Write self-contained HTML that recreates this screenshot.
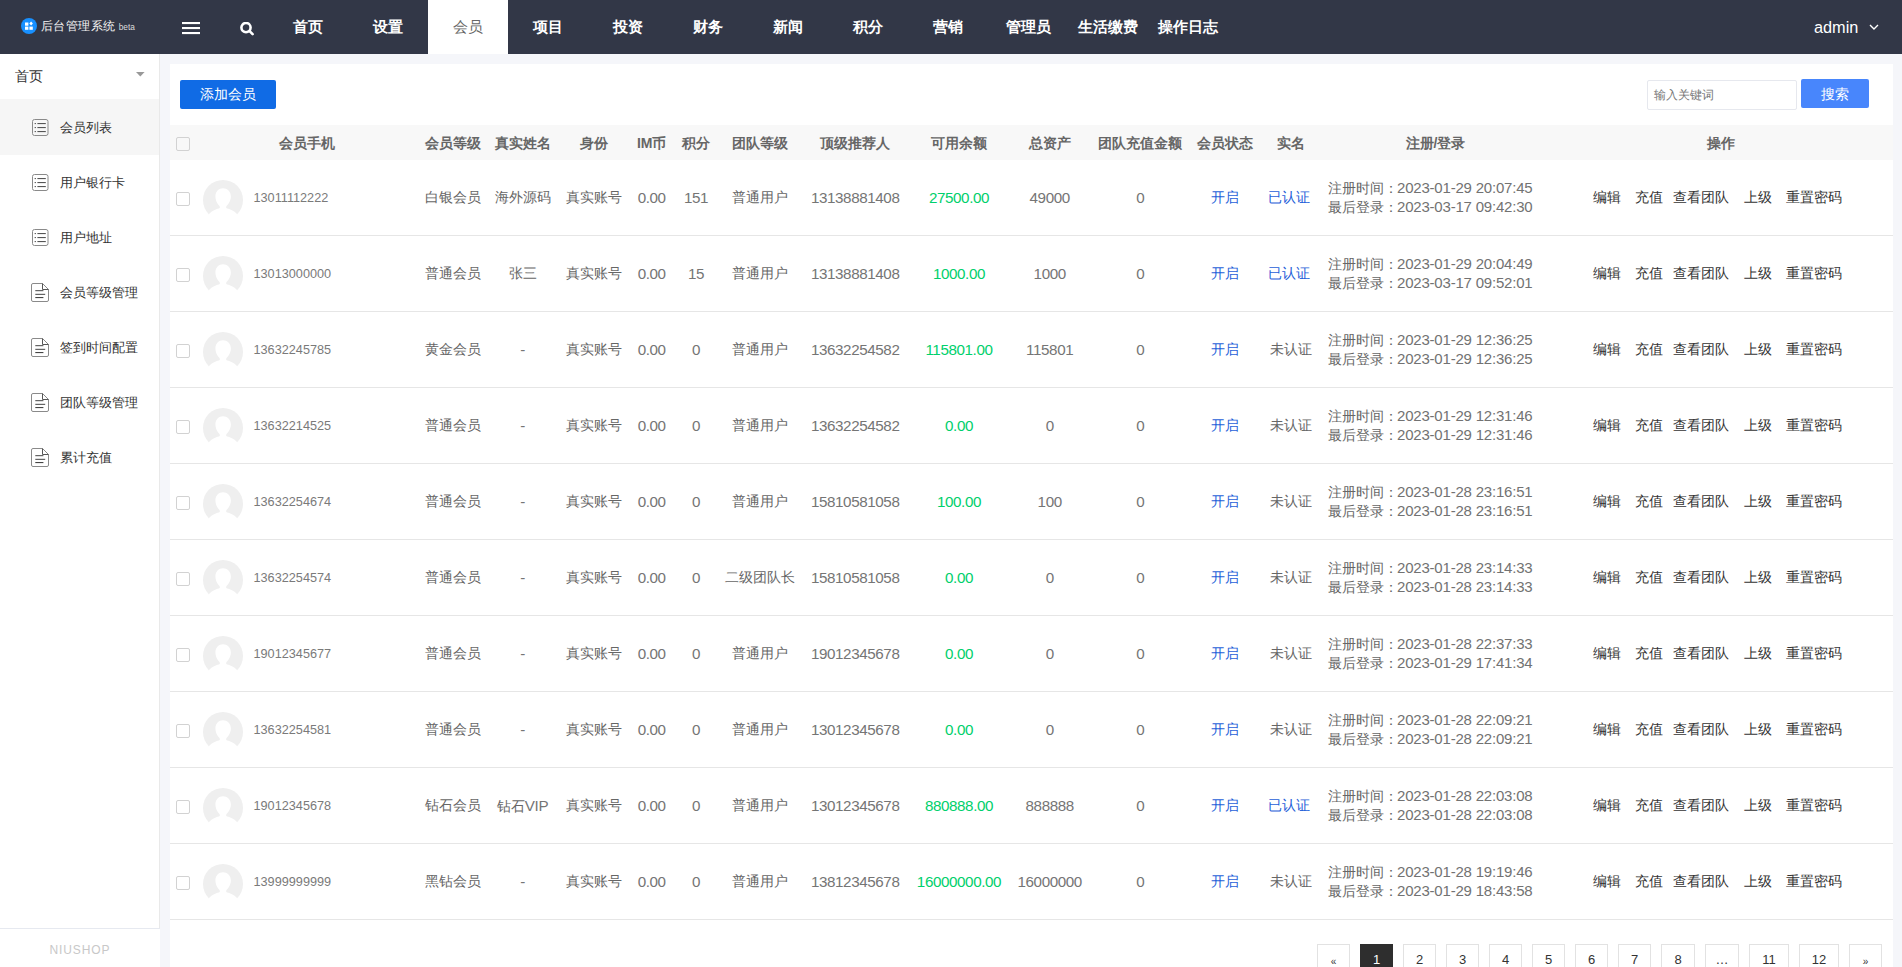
<!DOCTYPE html>
<html><head><meta charset="utf-8">
<style>
*{box-sizing:border-box;margin:0;padding:0}
html,body{width:1902px;height:967px;overflow:hidden}
body{background:#f5f6fa;font-family:"Liberation Sans",sans-serif;position:relative;color:#666}
.hd{position:absolute;left:0;top:0;width:1902px;height:54px;background:#323747}
.logo{position:absolute;left:21px;top:18px;width:16px;height:16px;border-radius:50%;background:#1890ff}
.logot{position:absolute;left:41px;top:16.8px;font-size:12.4px;letter-spacing:0.45px;line-height:18px;color:#f4f4f4;white-space:nowrap}
.logot small{font-size:8.3px;margin-left:3px;color:#ddd;letter-spacing:0}
.nv{position:absolute;top:0;width:80px;height:54px;line-height:54px;text-align:center;color:#fff;font-size:15px;font-weight:bold}
.nv.on{background:#fff;color:#666;font-weight:normal}
.admin{position:absolute;left:1814px;top:16px;font-size:16.3px;line-height:22px;color:#fff}
.sb{position:absolute;left:0;top:54px;width:160px;height:913px;background:#fff;border-right:1px solid #e9e9e9}
.sbh{position:absolute;left:15px;top:66px;font-size:14px;line-height:20px;color:#333}
.si{position:absolute;left:0;width:159px;height:56px}
.si.act{background:#f6f6f6}
.si .ic{position:absolute;left:32px;top:19px}
.si span{position:absolute;left:60px;top:19px;font-size:13px;line-height:20px;color:#333;white-space:nowrap}
.sf{position:absolute;left:0;top:928px;width:160px;height:39px;background:#fff;border-top:1px solid #e6e9f0}
.sf span{position:absolute;left:0;width:160px;top:14px;text-align:center;font-size:12px;line-height:14px;color:#c8c8c8;letter-spacing:0.9px}
.pn{position:absolute;left:170px;top:64px;width:1723px;height:903px;background:#fff}
.btn{position:absolute;left:180px;top:80px;width:96px;height:29px;background:#106be5;border-radius:2px;color:#fff;font-size:14px;line-height:29px;text-align:center}
.inp{position:absolute;left:1647px;top:80px;width:150px;height:30px;border:1px solid #e6e8ee;border-radius:2px;background:#fff;font-size:12px;line-height:28px;padding-left:6px;color:#777}
.sbtn{position:absolute;left:1801px;top:79px;width:68px;height:29px;background:#4886fc;border-radius:2px;color:#fff;font-size:14px;line-height:30px;text-align:center}
.th{position:absolute;left:170px;top:125px;width:1723px;height:35px;background:#f8f8f8}
.c{position:absolute;width:200px;height:75px;line-height:75px;text-align:center;font-size:14px;color:#666;white-space:nowrap}
.c.h{height:35px;line-height:36px;font-weight:bold}
.c .n{font-size:15.2px;letter-spacing:-0.4px;color:#757575}
.c.g .n{color:#00d06c}
.reg .n{font-size:15px;letter-spacing:-0.2px;color:#727272;margin-left:-1px}
.c.g{color:#12c66b}
.c.b{color:#1f5fd9}
.row{position:absolute;left:170px;width:1723px;height:76px;border-bottom:1px solid #e6e6e6}
.cb{position:absolute;left:176px;width:14px;height:14px;border:1px solid #d2d2d2;border-radius:2px;background:#fff}
.cbh{top:137px;background:#f8f8f8}
.av{position:absolute;left:203px;width:40px;height:40px}
.ph{position:absolute;left:253.5px;height:75px;line-height:77px;font-size:12.7px;color:#7a7a7a}
.reg{position:absolute;left:1328px;font-size:14px;line-height:19px;color:#666;white-space:nowrap}
.ops{position:absolute;left:0;width:0;height:75px}
.ops span{position:absolute;top:0;line-height:75px;font-size:14px;color:#333;white-space:nowrap}
.pg{position:absolute;top:944px;height:32px;border:1px solid #e2e2e2;background:#fff;text-align:center;line-height:30px;font-size:13px;color:#333}
.pg.on{background:#2e2e2e;border-color:#2e2e2e;color:#fff}
</style></head><body>
<div class="hd">
  <div class="logo"><svg width="16" height="16" viewBox="0 0 16 16"><rect x="4" y="4.5" width="3.4" height="3.2" fill="#fff"/><rect x="4" y="8.6" width="3.4" height="3.2" fill="#fff"/><rect x="8.4" y="8.6" width="3.4" height="3.2" fill="#fff"/><path d="M10.1 3.6 L11.9 5.6 L10.1 7.6 L8.3 5.6 Z" fill="#fff"/></svg></div>
  <div class="logot">后台管理系统<small>beta</small></div>
  <svg style="position:absolute;left:182px;top:22px" width="18" height="13" viewBox="0 0 18 13"><rect x="0" y="0" width="18" height="2.1" fill="#fff"/><rect x="0" y="5" width="18" height="2.1" fill="#fff"/><rect x="0" y="10" width="18" height="2.1" fill="#fff"/></svg>
  <svg style="position:absolute;left:240px;top:22px" width="15" height="14" viewBox="0 0 15 14"><circle cx="6" cy="5.6" r="4.6" fill="none" stroke="#fff" stroke-width="2.6"/><path d="M9.6 9.2 L12.6 12.2" stroke="#fff" stroke-width="2.6" stroke-linecap="round"/></svg>
  <div class="nv" style="left:268px">首页</div><div class="nv" style="left:348px">设置</div><div class="nv on" style="left:428px">会员</div><div class="nv" style="left:508px">项目</div><div class="nv" style="left:588px">投资</div><div class="nv" style="left:668px">财务</div><div class="nv" style="left:748px">新闻</div><div class="nv" style="left:828px">积分</div><div class="nv" style="left:908px">营销</div><div class="nv" style="left:988px">管理员</div><div class="nv" style="left:1068px">生活缴费</div><div class="nv" style="left:1148px">操作日志</div>
  <div class="admin">admin</div>
  <svg style="position:absolute;left:1869px;top:24px" width="10" height="7" viewBox="0 0 10 7"><path d="M1 1 L5 5 L9 1" fill="none" stroke="#fff" stroke-width="1.4"/></svg>
</div>
<div class="sb"></div>
<div class="sbh">首页</div>
<svg style="position:absolute;left:135.5px;top:72px" width="9" height="5" viewBox="0 0 9 5"><path d="M0 0 H8.6 L4.3 4.6 Z" fill="#999"/></svg>
<div class="si act" style="top:99px"><svg style="position:absolute;left:32px;top:20px" width="17" height="17" viewBox="0 0 17 17"><rect x="0.5" y="0.5" width="15.5" height="16" rx="2" fill="none" stroke="#8a8a8a" stroke-width="1"/><rect x="2.6" y="4" width="1.4" height="1.1" fill="#666"/><rect x="2.6" y="8" width="1.4" height="1.1" fill="#666"/><rect x="2.6" y="12" width="1.4" height="1.1" fill="#666"/><rect x="5.4" y="4" width="8.4" height="1.1" fill="#555"/><rect x="5.4" y="8" width="8.4" height="1.1" fill="#555"/><rect x="5.4" y="12" width="8.4" height="1.1" fill="#555"/></svg><span>会员列表</span></div>
<div class="si" style="top:154px"><svg style="position:absolute;left:32px;top:20px" width="17" height="17" viewBox="0 0 17 17"><rect x="0.5" y="0.5" width="15.5" height="16" rx="2" fill="none" stroke="#8a8a8a" stroke-width="1"/><rect x="2.6" y="4" width="1.4" height="1.1" fill="#666"/><rect x="2.6" y="8" width="1.4" height="1.1" fill="#666"/><rect x="2.6" y="12" width="1.4" height="1.1" fill="#666"/><rect x="5.4" y="4" width="8.4" height="1.1" fill="#555"/><rect x="5.4" y="8" width="8.4" height="1.1" fill="#555"/><rect x="5.4" y="12" width="8.4" height="1.1" fill="#555"/></svg><span>用户银行卡</span></div>
<div class="si" style="top:209px"><svg style="position:absolute;left:32px;top:20px" width="17" height="17" viewBox="0 0 17 17"><rect x="0.5" y="0.5" width="15.5" height="16" rx="2" fill="none" stroke="#8a8a8a" stroke-width="1"/><rect x="2.6" y="4" width="1.4" height="1.1" fill="#666"/><rect x="2.6" y="8" width="1.4" height="1.1" fill="#666"/><rect x="2.6" y="12" width="1.4" height="1.1" fill="#666"/><rect x="5.4" y="4" width="8.4" height="1.1" fill="#555"/><rect x="5.4" y="8" width="8.4" height="1.1" fill="#555"/><rect x="5.4" y="12" width="8.4" height="1.1" fill="#555"/></svg><span>用户地址</span></div>
<div class="si" style="top:264px"><svg style="position:absolute;left:31px;top:19px" width="18" height="19" viewBox="0 0 18 19"><path d="M2 0.5 H11.5 L17.5 6.5 V17 Q17.5 18.5 16 18.5 H2 Q0.5 18.5 0.5 17 V2 Q0.5 0.5 2 0.5 Z" fill="none" stroke="#8a8a8a" stroke-width="1"/><path d="M11.5 0.5 V6.5 H17.5" fill="none" stroke="#555" stroke-width="1"/><rect x="4.3" y="7.1" width="8.1" height="1.1" fill="#555"/><rect x="4.3" y="10.8" width="9.9" height="1.1" fill="#555"/><rect x="4.3" y="14" width="8.1" height="1.1" fill="#444"/></svg><span>会员等级管理</span></div>
<div class="si" style="top:319px"><svg style="position:absolute;left:31px;top:19px" width="18" height="19" viewBox="0 0 18 19"><path d="M2 0.5 H11.5 L17.5 6.5 V17 Q17.5 18.5 16 18.5 H2 Q0.5 18.5 0.5 17 V2 Q0.5 0.5 2 0.5 Z" fill="none" stroke="#8a8a8a" stroke-width="1"/><path d="M11.5 0.5 V6.5 H17.5" fill="none" stroke="#555" stroke-width="1"/><rect x="4.3" y="7.1" width="8.1" height="1.1" fill="#555"/><rect x="4.3" y="10.8" width="9.9" height="1.1" fill="#555"/><rect x="4.3" y="14" width="8.1" height="1.1" fill="#444"/></svg><span>签到时间配置</span></div>
<div class="si" style="top:374px"><svg style="position:absolute;left:31px;top:19px" width="18" height="19" viewBox="0 0 18 19"><path d="M2 0.5 H11.5 L17.5 6.5 V17 Q17.5 18.5 16 18.5 H2 Q0.5 18.5 0.5 17 V2 Q0.5 0.5 2 0.5 Z" fill="none" stroke="#8a8a8a" stroke-width="1"/><path d="M11.5 0.5 V6.5 H17.5" fill="none" stroke="#555" stroke-width="1"/><rect x="4.3" y="7.1" width="8.1" height="1.1" fill="#555"/><rect x="4.3" y="10.8" width="9.9" height="1.1" fill="#555"/><rect x="4.3" y="14" width="8.1" height="1.1" fill="#444"/></svg><span>团队等级管理</span></div>
<div class="si" style="top:429px"><svg style="position:absolute;left:31px;top:19px" width="18" height="19" viewBox="0 0 18 19"><path d="M2 0.5 H11.5 L17.5 6.5 V17 Q17.5 18.5 16 18.5 H2 Q0.5 18.5 0.5 17 V2 Q0.5 0.5 2 0.5 Z" fill="none" stroke="#8a8a8a" stroke-width="1"/><path d="M11.5 0.5 V6.5 H17.5" fill="none" stroke="#555" stroke-width="1"/><rect x="4.3" y="7.1" width="8.1" height="1.1" fill="#555"/><rect x="4.3" y="10.8" width="9.9" height="1.1" fill="#555"/><rect x="4.3" y="14" width="8.1" height="1.1" fill="#444"/></svg><span>累计充值</span></div>
<div class="sf"><span>NIUSHOP</span></div>
<div class="pn"></div>
<div class="btn">添加会员</div>
<div class="inp">输入关键词</div>
<div class="sbtn">搜索</div>
<div class="th"></div>
<div class="cb cbh"></div>
<div class="c h" style="left:207.0px;top:125px">会员手机</div>
<div class="c h" style="left:352.5px;top:125px">会员等级</div>
<div class="c h" style="left:422.5px;top:125px">真实姓名</div>
<div class="c h" style="left:493.5px;top:125px">身份</div>
<div class="c h" style="left:551.7px;top:125px">IM币</div>
<div class="c h" style="left:596.0px;top:125px">积分</div>
<div class="c h" style="left:659.5px;top:125px">团队等级</div>
<div class="c h" style="left:755.2px;top:125px">顶级推荐人</div>
<div class="c h" style="left:859.0px;top:125px">可用余额</div>
<div class="c h" style="left:949.7px;top:125px">总资产</div>
<div class="c h" style="left:1040.2px;top:125px">团队充值金额</div>
<div class="c h" style="left:1125.0px;top:125px">会员状态</div>
<div class="c h" style="left:1191.0px;top:125px">实名</div>
<div class="c h" style="left:1335.5px;top:125px">注册/登录</div>
<div class="c h" style="left:1621.0px;top:125px">操作</div>
<div class="row" style="top:160px"></div>
<div class="cb" style="top:192px"></div>
<div class="av" style="top:180px"><svg width="40" height="40" viewBox="0 0 40 40"><circle cx="20" cy="20" r="20" fill="#efefef"/><path d="M6 34 C9 30.5 13 29 16.5 28.2 C17 27.5 17 27 16.5 26 C13.5 23 12.4 19.5 12.4 16.5 C12.4 11.5 15.8 8.3 20 8.3 C24.2 8.3 27.9 11.5 27.9 16.5 C27.9 19.5 26.5 23 23.5 26 C23 27 23 27.5 23.5 28.2 C27 29 31 30.5 34 34 L34 42 L6 42 Z" fill="#fff"/></svg></div>
<div class="ph" style="top:160px">13011112222</div>
<div class="c " style="left:352.5px;top:160px">白银会员</div>
<div class="c " style="left:422.5px;top:160px">海外源码</div>
<div class="c " style="left:493.5px;top:160px">真实账号</div>
<div class="c " style="left:551.7px;top:160px"><span class="n">0.00</span></div>
<div class="c " style="left:596.0px;top:160px"><span class="n">151</span></div>
<div class="c " style="left:659.5px;top:160px">普通用户</div>
<div class="c " style="left:755.2px;top:160px"><span class="n">13138881408</span></div>
<div class="c g" style="left:859.0px;top:160px"><span class="n">27500.00</span></div>
<div class="c " style="left:949.7px;top:160px"><span class="n">49000</span></div>
<div class="c " style="left:1040.2px;top:160px"><span class="n">0</span></div>
<div class="c b" style="left:1125.0px;top:160px">开启</div>
<div class="c b" style="left:1188.5px;top:160px">已认证</div>
<div class="reg" style="top:178px">注册时间：<span class="n">2023-01-29 20:07:45</span></div><div class="reg" style="top:197px">最后登录：<span class="n">2023-03-17 09:42:30</span></div>
<div class="ops" style="top:160px"><span style="left:1593px">编辑</span><span style="left:1635px">充值</span><span style="left:1673px">查看团队</span><span style="left:1744px">上级</span><span style="left:1786px">重置密码</span></div>
<div class="row" style="top:236px"></div>
<div class="cb" style="top:268px"></div>
<div class="av" style="top:256px"><svg width="40" height="40" viewBox="0 0 40 40"><circle cx="20" cy="20" r="20" fill="#efefef"/><path d="M6 34 C9 30.5 13 29 16.5 28.2 C17 27.5 17 27 16.5 26 C13.5 23 12.4 19.5 12.4 16.5 C12.4 11.5 15.8 8.3 20 8.3 C24.2 8.3 27.9 11.5 27.9 16.5 C27.9 19.5 26.5 23 23.5 26 C23 27 23 27.5 23.5 28.2 C27 29 31 30.5 34 34 L34 42 L6 42 Z" fill="#fff"/></svg></div>
<div class="ph" style="top:236px">13013000000</div>
<div class="c " style="left:352.5px;top:236px">普通会员</div>
<div class="c " style="left:422.5px;top:236px">张三</div>
<div class="c " style="left:493.5px;top:236px">真实账号</div>
<div class="c " style="left:551.7px;top:236px"><span class="n">0.00</span></div>
<div class="c " style="left:596.0px;top:236px"><span class="n">15</span></div>
<div class="c " style="left:659.5px;top:236px">普通用户</div>
<div class="c " style="left:755.2px;top:236px"><span class="n">13138881408</span></div>
<div class="c g" style="left:859.0px;top:236px"><span class="n">1000.00</span></div>
<div class="c " style="left:949.7px;top:236px"><span class="n">1000</span></div>
<div class="c " style="left:1040.2px;top:236px"><span class="n">0</span></div>
<div class="c b" style="left:1125.0px;top:236px">开启</div>
<div class="c b" style="left:1188.5px;top:236px">已认证</div>
<div class="reg" style="top:254px">注册时间：<span class="n">2023-01-29 20:04:49</span></div><div class="reg" style="top:273px">最后登录：<span class="n">2023-03-17 09:52:01</span></div>
<div class="ops" style="top:236px"><span style="left:1593px">编辑</span><span style="left:1635px">充值</span><span style="left:1673px">查看团队</span><span style="left:1744px">上级</span><span style="left:1786px">重置密码</span></div>
<div class="row" style="top:312px"></div>
<div class="cb" style="top:344px"></div>
<div class="av" style="top:332px"><svg width="40" height="40" viewBox="0 0 40 40"><circle cx="20" cy="20" r="20" fill="#efefef"/><path d="M6 34 C9 30.5 13 29 16.5 28.2 C17 27.5 17 27 16.5 26 C13.5 23 12.4 19.5 12.4 16.5 C12.4 11.5 15.8 8.3 20 8.3 C24.2 8.3 27.9 11.5 27.9 16.5 C27.9 19.5 26.5 23 23.5 26 C23 27 23 27.5 23.5 28.2 C27 29 31 30.5 34 34 L34 42 L6 42 Z" fill="#fff"/></svg></div>
<div class="ph" style="top:312px">13632245785</div>
<div class="c " style="left:352.5px;top:312px">黄金会员</div>
<div class="c " style="left:422.5px;top:312px"><span class="n">-</span></div>
<div class="c " style="left:493.5px;top:312px">真实账号</div>
<div class="c " style="left:551.7px;top:312px"><span class="n">0.00</span></div>
<div class="c " style="left:596.0px;top:312px"><span class="n">0</span></div>
<div class="c " style="left:659.5px;top:312px">普通用户</div>
<div class="c " style="left:755.2px;top:312px"><span class="n">13632254582</span></div>
<div class="c g" style="left:859.0px;top:312px"><span class="n">115801.00</span></div>
<div class="c " style="left:949.7px;top:312px"><span class="n">115801</span></div>
<div class="c " style="left:1040.2px;top:312px"><span class="n">0</span></div>
<div class="c b" style="left:1125.0px;top:312px">开启</div>
<div class="c " style="left:1191.0px;top:312px">未认证</div>
<div class="reg" style="top:330px">注册时间：<span class="n">2023-01-29 12:36:25</span></div><div class="reg" style="top:349px">最后登录：<span class="n">2023-01-29 12:36:25</span></div>
<div class="ops" style="top:312px"><span style="left:1593px">编辑</span><span style="left:1635px">充值</span><span style="left:1673px">查看团队</span><span style="left:1744px">上级</span><span style="left:1786px">重置密码</span></div>
<div class="row" style="top:388px"></div>
<div class="cb" style="top:420px"></div>
<div class="av" style="top:408px"><svg width="40" height="40" viewBox="0 0 40 40"><circle cx="20" cy="20" r="20" fill="#efefef"/><path d="M6 34 C9 30.5 13 29 16.5 28.2 C17 27.5 17 27 16.5 26 C13.5 23 12.4 19.5 12.4 16.5 C12.4 11.5 15.8 8.3 20 8.3 C24.2 8.3 27.9 11.5 27.9 16.5 C27.9 19.5 26.5 23 23.5 26 C23 27 23 27.5 23.5 28.2 C27 29 31 30.5 34 34 L34 42 L6 42 Z" fill="#fff"/></svg></div>
<div class="ph" style="top:388px">13632214525</div>
<div class="c " style="left:352.5px;top:388px">普通会员</div>
<div class="c " style="left:422.5px;top:388px"><span class="n">-</span></div>
<div class="c " style="left:493.5px;top:388px">真实账号</div>
<div class="c " style="left:551.7px;top:388px"><span class="n">0.00</span></div>
<div class="c " style="left:596.0px;top:388px"><span class="n">0</span></div>
<div class="c " style="left:659.5px;top:388px">普通用户</div>
<div class="c " style="left:755.2px;top:388px"><span class="n">13632254582</span></div>
<div class="c g" style="left:859.0px;top:388px"><span class="n">0.00</span></div>
<div class="c " style="left:949.7px;top:388px"><span class="n">0</span></div>
<div class="c " style="left:1040.2px;top:388px"><span class="n">0</span></div>
<div class="c b" style="left:1125.0px;top:388px">开启</div>
<div class="c " style="left:1191.0px;top:388px">未认证</div>
<div class="reg" style="top:406px">注册时间：<span class="n">2023-01-29 12:31:46</span></div><div class="reg" style="top:425px">最后登录：<span class="n">2023-01-29 12:31:46</span></div>
<div class="ops" style="top:388px"><span style="left:1593px">编辑</span><span style="left:1635px">充值</span><span style="left:1673px">查看团队</span><span style="left:1744px">上级</span><span style="left:1786px">重置密码</span></div>
<div class="row" style="top:464px"></div>
<div class="cb" style="top:496px"></div>
<div class="av" style="top:484px"><svg width="40" height="40" viewBox="0 0 40 40"><circle cx="20" cy="20" r="20" fill="#efefef"/><path d="M6 34 C9 30.5 13 29 16.5 28.2 C17 27.5 17 27 16.5 26 C13.5 23 12.4 19.5 12.4 16.5 C12.4 11.5 15.8 8.3 20 8.3 C24.2 8.3 27.9 11.5 27.9 16.5 C27.9 19.5 26.5 23 23.5 26 C23 27 23 27.5 23.5 28.2 C27 29 31 30.5 34 34 L34 42 L6 42 Z" fill="#fff"/></svg></div>
<div class="ph" style="top:464px">13632254674</div>
<div class="c " style="left:352.5px;top:464px">普通会员</div>
<div class="c " style="left:422.5px;top:464px"><span class="n">-</span></div>
<div class="c " style="left:493.5px;top:464px">真实账号</div>
<div class="c " style="left:551.7px;top:464px"><span class="n">0.00</span></div>
<div class="c " style="left:596.0px;top:464px"><span class="n">0</span></div>
<div class="c " style="left:659.5px;top:464px">普通用户</div>
<div class="c " style="left:755.2px;top:464px"><span class="n">15810581058</span></div>
<div class="c g" style="left:859.0px;top:464px"><span class="n">100.00</span></div>
<div class="c " style="left:949.7px;top:464px"><span class="n">100</span></div>
<div class="c " style="left:1040.2px;top:464px"><span class="n">0</span></div>
<div class="c b" style="left:1125.0px;top:464px">开启</div>
<div class="c " style="left:1191.0px;top:464px">未认证</div>
<div class="reg" style="top:482px">注册时间：<span class="n">2023-01-28 23:16:51</span></div><div class="reg" style="top:501px">最后登录：<span class="n">2023-01-28 23:16:51</span></div>
<div class="ops" style="top:464px"><span style="left:1593px">编辑</span><span style="left:1635px">充值</span><span style="left:1673px">查看团队</span><span style="left:1744px">上级</span><span style="left:1786px">重置密码</span></div>
<div class="row" style="top:540px"></div>
<div class="cb" style="top:572px"></div>
<div class="av" style="top:560px"><svg width="40" height="40" viewBox="0 0 40 40"><circle cx="20" cy="20" r="20" fill="#efefef"/><path d="M6 34 C9 30.5 13 29 16.5 28.2 C17 27.5 17 27 16.5 26 C13.5 23 12.4 19.5 12.4 16.5 C12.4 11.5 15.8 8.3 20 8.3 C24.2 8.3 27.9 11.5 27.9 16.5 C27.9 19.5 26.5 23 23.5 26 C23 27 23 27.5 23.5 28.2 C27 29 31 30.5 34 34 L34 42 L6 42 Z" fill="#fff"/></svg></div>
<div class="ph" style="top:540px">13632254574</div>
<div class="c " style="left:352.5px;top:540px">普通会员</div>
<div class="c " style="left:422.5px;top:540px"><span class="n">-</span></div>
<div class="c " style="left:493.5px;top:540px">真实账号</div>
<div class="c " style="left:551.7px;top:540px"><span class="n">0.00</span></div>
<div class="c " style="left:596.0px;top:540px"><span class="n">0</span></div>
<div class="c " style="left:659.5px;top:540px">二级团队长</div>
<div class="c " style="left:755.2px;top:540px"><span class="n">15810581058</span></div>
<div class="c g" style="left:859.0px;top:540px"><span class="n">0.00</span></div>
<div class="c " style="left:949.7px;top:540px"><span class="n">0</span></div>
<div class="c " style="left:1040.2px;top:540px"><span class="n">0</span></div>
<div class="c b" style="left:1125.0px;top:540px">开启</div>
<div class="c " style="left:1191.0px;top:540px">未认证</div>
<div class="reg" style="top:558px">注册时间：<span class="n">2023-01-28 23:14:33</span></div><div class="reg" style="top:577px">最后登录：<span class="n">2023-01-28 23:14:33</span></div>
<div class="ops" style="top:540px"><span style="left:1593px">编辑</span><span style="left:1635px">充值</span><span style="left:1673px">查看团队</span><span style="left:1744px">上级</span><span style="left:1786px">重置密码</span></div>
<div class="row" style="top:616px"></div>
<div class="cb" style="top:648px"></div>
<div class="av" style="top:636px"><svg width="40" height="40" viewBox="0 0 40 40"><circle cx="20" cy="20" r="20" fill="#efefef"/><path d="M6 34 C9 30.5 13 29 16.5 28.2 C17 27.5 17 27 16.5 26 C13.5 23 12.4 19.5 12.4 16.5 C12.4 11.5 15.8 8.3 20 8.3 C24.2 8.3 27.9 11.5 27.9 16.5 C27.9 19.5 26.5 23 23.5 26 C23 27 23 27.5 23.5 28.2 C27 29 31 30.5 34 34 L34 42 L6 42 Z" fill="#fff"/></svg></div>
<div class="ph" style="top:616px">19012345677</div>
<div class="c " style="left:352.5px;top:616px">普通会员</div>
<div class="c " style="left:422.5px;top:616px"><span class="n">-</span></div>
<div class="c " style="left:493.5px;top:616px">真实账号</div>
<div class="c " style="left:551.7px;top:616px"><span class="n">0.00</span></div>
<div class="c " style="left:596.0px;top:616px"><span class="n">0</span></div>
<div class="c " style="left:659.5px;top:616px">普通用户</div>
<div class="c " style="left:755.2px;top:616px"><span class="n">19012345678</span></div>
<div class="c g" style="left:859.0px;top:616px"><span class="n">0.00</span></div>
<div class="c " style="left:949.7px;top:616px"><span class="n">0</span></div>
<div class="c " style="left:1040.2px;top:616px"><span class="n">0</span></div>
<div class="c b" style="left:1125.0px;top:616px">开启</div>
<div class="c " style="left:1191.0px;top:616px">未认证</div>
<div class="reg" style="top:634px">注册时间：<span class="n">2023-01-28 22:37:33</span></div><div class="reg" style="top:653px">最后登录：<span class="n">2023-01-29 17:41:34</span></div>
<div class="ops" style="top:616px"><span style="left:1593px">编辑</span><span style="left:1635px">充值</span><span style="left:1673px">查看团队</span><span style="left:1744px">上级</span><span style="left:1786px">重置密码</span></div>
<div class="row" style="top:692px"></div>
<div class="cb" style="top:724px"></div>
<div class="av" style="top:712px"><svg width="40" height="40" viewBox="0 0 40 40"><circle cx="20" cy="20" r="20" fill="#efefef"/><path d="M6 34 C9 30.5 13 29 16.5 28.2 C17 27.5 17 27 16.5 26 C13.5 23 12.4 19.5 12.4 16.5 C12.4 11.5 15.8 8.3 20 8.3 C24.2 8.3 27.9 11.5 27.9 16.5 C27.9 19.5 26.5 23 23.5 26 C23 27 23 27.5 23.5 28.2 C27 29 31 30.5 34 34 L34 42 L6 42 Z" fill="#fff"/></svg></div>
<div class="ph" style="top:692px">13632254581</div>
<div class="c " style="left:352.5px;top:692px">普通会员</div>
<div class="c " style="left:422.5px;top:692px"><span class="n">-</span></div>
<div class="c " style="left:493.5px;top:692px">真实账号</div>
<div class="c " style="left:551.7px;top:692px"><span class="n">0.00</span></div>
<div class="c " style="left:596.0px;top:692px"><span class="n">0</span></div>
<div class="c " style="left:659.5px;top:692px">普通用户</div>
<div class="c " style="left:755.2px;top:692px"><span class="n">13012345678</span></div>
<div class="c g" style="left:859.0px;top:692px"><span class="n">0.00</span></div>
<div class="c " style="left:949.7px;top:692px"><span class="n">0</span></div>
<div class="c " style="left:1040.2px;top:692px"><span class="n">0</span></div>
<div class="c b" style="left:1125.0px;top:692px">开启</div>
<div class="c " style="left:1191.0px;top:692px">未认证</div>
<div class="reg" style="top:710px">注册时间：<span class="n">2023-01-28 22:09:21</span></div><div class="reg" style="top:729px">最后登录：<span class="n">2023-01-28 22:09:21</span></div>
<div class="ops" style="top:692px"><span style="left:1593px">编辑</span><span style="left:1635px">充值</span><span style="left:1673px">查看团队</span><span style="left:1744px">上级</span><span style="left:1786px">重置密码</span></div>
<div class="row" style="top:768px"></div>
<div class="cb" style="top:800px"></div>
<div class="av" style="top:788px"><svg width="40" height="40" viewBox="0 0 40 40"><circle cx="20" cy="20" r="20" fill="#efefef"/><path d="M6 34 C9 30.5 13 29 16.5 28.2 C17 27.5 17 27 16.5 26 C13.5 23 12.4 19.5 12.4 16.5 C12.4 11.5 15.8 8.3 20 8.3 C24.2 8.3 27.9 11.5 27.9 16.5 C27.9 19.5 26.5 23 23.5 26 C23 27 23 27.5 23.5 28.2 C27 29 31 30.5 34 34 L34 42 L6 42 Z" fill="#fff"/></svg></div>
<div class="ph" style="top:768px">19012345678</div>
<div class="c " style="left:352.5px;top:768px">钻石会员</div>
<div class="c " style="left:422.5px;top:768px">钻石<span class="n">VIP</span></div>
<div class="c " style="left:493.5px;top:768px">真实账号</div>
<div class="c " style="left:551.7px;top:768px"><span class="n">0.00</span></div>
<div class="c " style="left:596.0px;top:768px"><span class="n">0</span></div>
<div class="c " style="left:659.5px;top:768px">普通用户</div>
<div class="c " style="left:755.2px;top:768px"><span class="n">13012345678</span></div>
<div class="c g" style="left:859.0px;top:768px"><span class="n">880888.00</span></div>
<div class="c " style="left:949.7px;top:768px"><span class="n">888888</span></div>
<div class="c " style="left:1040.2px;top:768px"><span class="n">0</span></div>
<div class="c b" style="left:1125.0px;top:768px">开启</div>
<div class="c b" style="left:1188.5px;top:768px">已认证</div>
<div class="reg" style="top:786px">注册时间：<span class="n">2023-01-28 22:03:08</span></div><div class="reg" style="top:805px">最后登录：<span class="n">2023-01-28 22:03:08</span></div>
<div class="ops" style="top:768px"><span style="left:1593px">编辑</span><span style="left:1635px">充值</span><span style="left:1673px">查看团队</span><span style="left:1744px">上级</span><span style="left:1786px">重置密码</span></div>
<div class="row" style="top:844px"></div>
<div class="cb" style="top:876px"></div>
<div class="av" style="top:864px"><svg width="40" height="40" viewBox="0 0 40 40"><circle cx="20" cy="20" r="20" fill="#efefef"/><path d="M6 34 C9 30.5 13 29 16.5 28.2 C17 27.5 17 27 16.5 26 C13.5 23 12.4 19.5 12.4 16.5 C12.4 11.5 15.8 8.3 20 8.3 C24.2 8.3 27.9 11.5 27.9 16.5 C27.9 19.5 26.5 23 23.5 26 C23 27 23 27.5 23.5 28.2 C27 29 31 30.5 34 34 L34 42 L6 42 Z" fill="#fff"/></svg></div>
<div class="ph" style="top:844px">13999999999</div>
<div class="c " style="left:352.5px;top:844px">黑钻会员</div>
<div class="c " style="left:422.5px;top:844px"><span class="n">-</span></div>
<div class="c " style="left:493.5px;top:844px">真实账号</div>
<div class="c " style="left:551.7px;top:844px"><span class="n">0.00</span></div>
<div class="c " style="left:596.0px;top:844px"><span class="n">0</span></div>
<div class="c " style="left:659.5px;top:844px">普通用户</div>
<div class="c " style="left:755.2px;top:844px"><span class="n">13812345678</span></div>
<div class="c g" style="left:859.0px;top:844px"><span class="n">16000000.00</span></div>
<div class="c " style="left:949.7px;top:844px"><span class="n">16000000</span></div>
<div class="c " style="left:1040.2px;top:844px"><span class="n">0</span></div>
<div class="c b" style="left:1125.0px;top:844px">开启</div>
<div class="c " style="left:1191.0px;top:844px">未认证</div>
<div class="reg" style="top:862px">注册时间：<span class="n">2023-01-28 19:19:46</span></div><div class="reg" style="top:881px">最后登录：<span class="n">2023-01-29 18:43:58</span></div>
<div class="ops" style="top:844px"><span style="left:1593px">编辑</span><span style="left:1635px">充值</span><span style="left:1673px">查看团队</span><span style="left:1744px">上级</span><span style="left:1786px">重置密码</span></div>
<div class="pg" style="left:1317px;width:33px"><span style="font-size:10px;position:relative;top:1px">«</span></div><div class="pg on" style="left:1360px;width:33px">1</div><div class="pg" style="left:1403px;width:33px">2</div><div class="pg" style="left:1446px;width:33px">3</div><div class="pg" style="left:1489px;width:33px">4</div><div class="pg" style="left:1532px;width:33px">5</div><div class="pg" style="left:1575px;width:33px">6</div><div class="pg" style="left:1618px;width:33px">7</div><div class="pg" style="left:1661px;width:34px">8</div><div class="pg" style="left:1705px;width:34px">…</div><div class="pg" style="left:1749px;width:40px">11</div><div class="pg" style="left:1799px;width:40px">12</div><div class="pg" style="left:1849px;width:33px"><span style="font-size:10px;position:relative;top:1px">»</span></div>
</body></html>
